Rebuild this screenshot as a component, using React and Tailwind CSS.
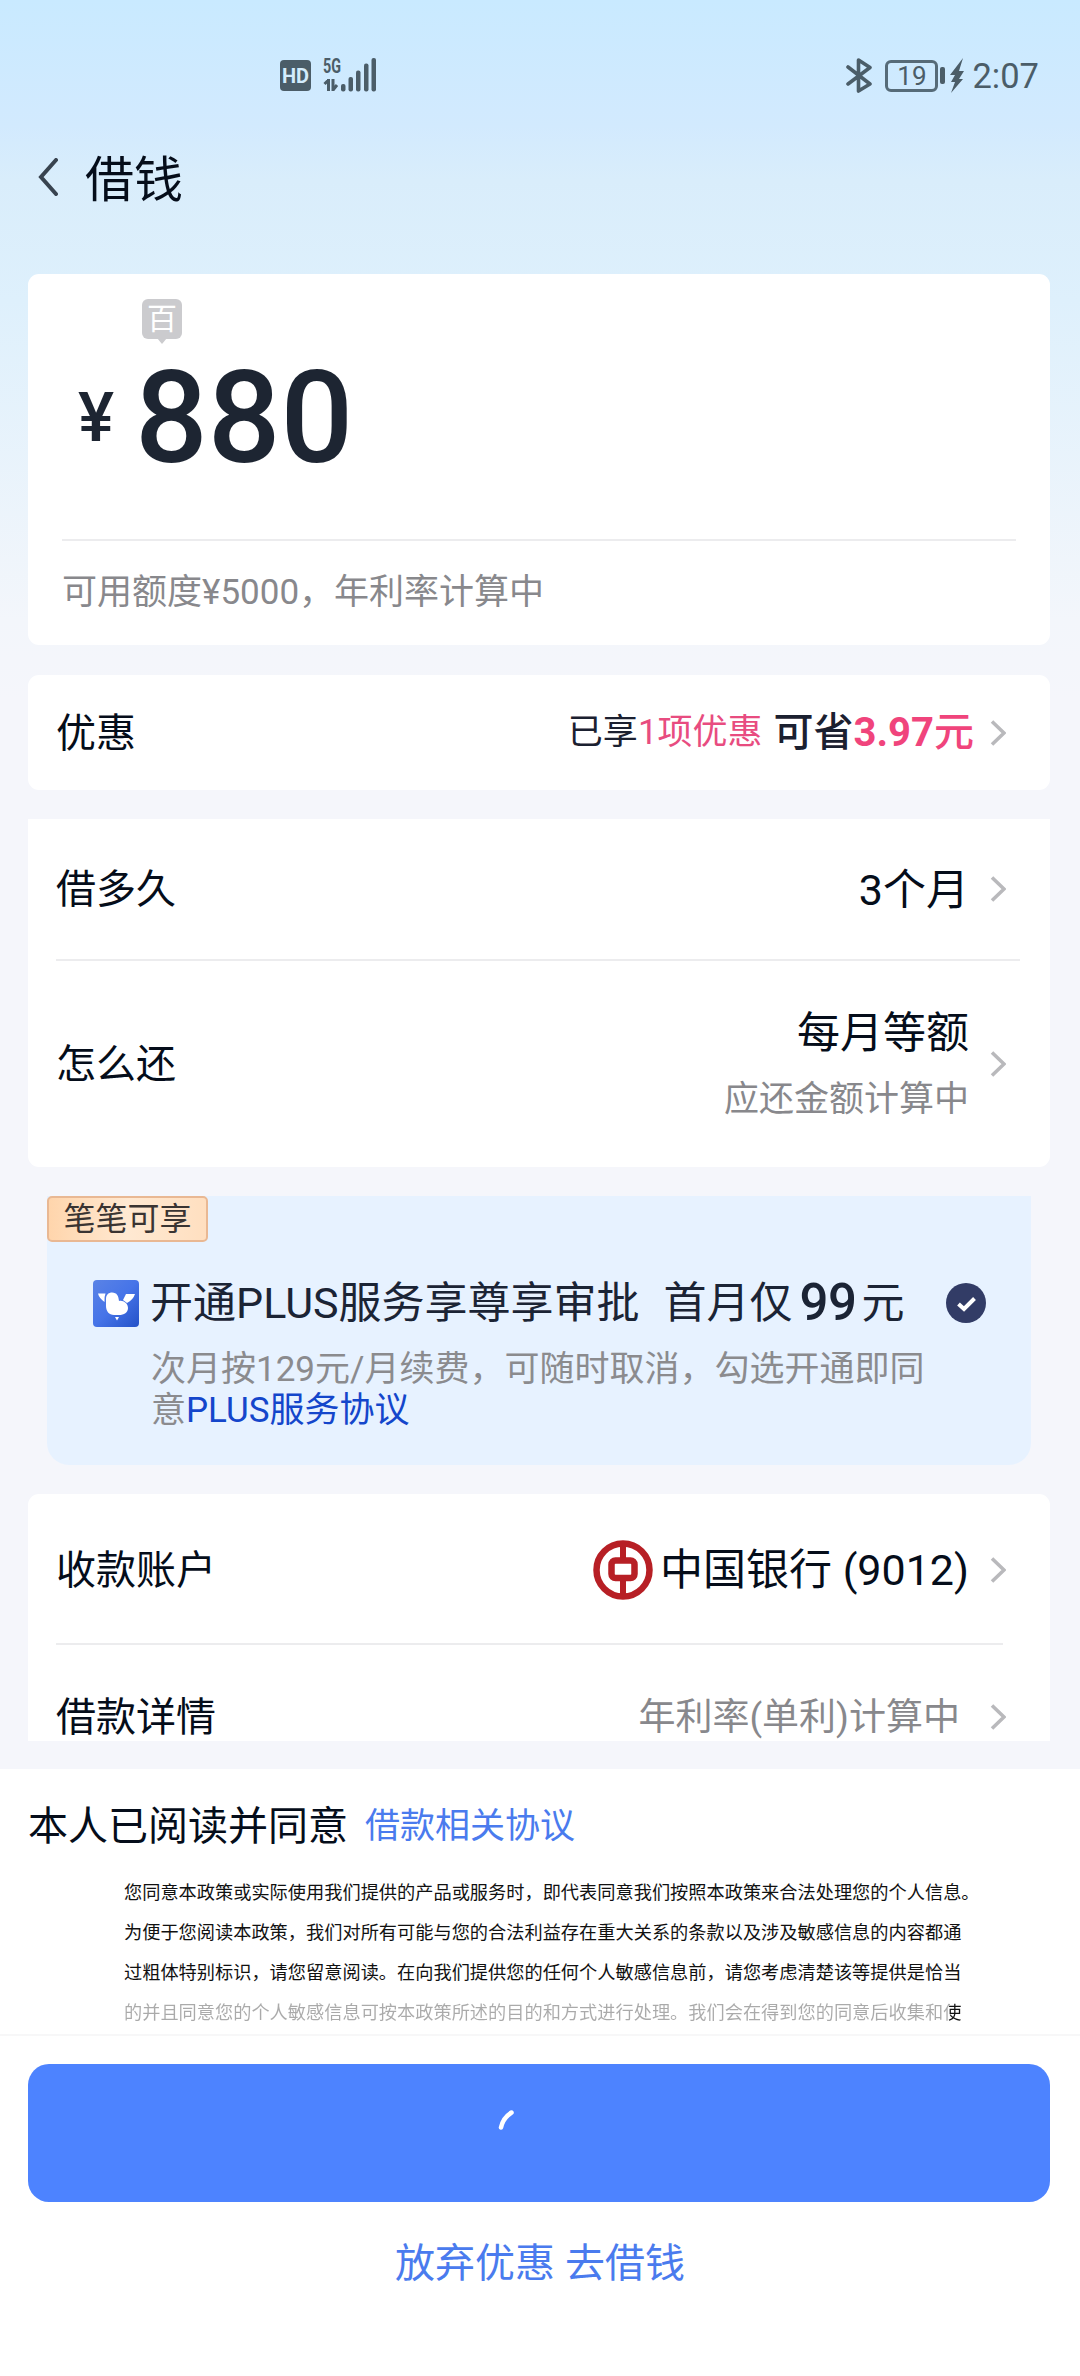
import React from 'react';

const Chevron = () => (
  <svg className="w-4 h-[26px] shrink-0" viewBox="0 0 16 26" fill="none">
    <path d="M2 1.5L14 13L2 24.5" stroke="#b9b9bc" strokeWidth="3.6" />
  </svg>
);

const Row = ({ label, className, children }) => (
  <div className={`flex items-center justify-between pl-7 pr-11 ${className}`}>
    <span className="mt-0.5 text-[40px] text-[#050d1a]">{label}</span>
    <div className="flex items-center">
      {children}
      <Chevron />
    </div>
  </div>
);

const StatusBar = () => (
  <div className="h-[150px] flex items-start justify-between pl-[280px] pr-[41px] pt-[58px] text-[#4b5d68]">
    <div className="flex items-start">
      <div className="w-[31px] h-[31px] mt-0.5 mr-3 rounded-[4px] bg-[#4b5d68] text-[#d3ecfc] flex items-center justify-center text-[20px] font-bold leading-none">
        HD
      </div>
      <svg className="w-[54px] h-[46px] -mt-3" viewBox="0 -12 54 46">
        <text x="0" y="15" fontSize="20" fontWeight="700" textLength="18" lengthAdjust="spacingAndGlyphs" fill="#4b5d68">5G</text>
        <path d="M5.5 21V33M5.5 22L1.5 26M10 21V33M10 32L14 27" stroke="#4b5d68" strokeWidth="3" fill="none" />
        <g fill="#4b5d68">
          <rect x="18" y="26" width="4.5" height="7.5" rx="2" />
          <rect x="25.5" y="19" width="4.5" height="14.5" rx="2" />
          <rect x="33" y="12.5" width="4.5" height="21" rx="2" />
          <rect x="41" y="5.5" width="4.5" height="28" rx="2" />
          <rect x="48.5" y="0" width="4.5" height="33.5" rx="2" />
        </g>
      </svg>
    </div>
    <div className="flex items-start">
      <svg className="w-[27px] h-[35px] mr-3" viewBox="0 0 27 35" fill="none">
        <path d="M2 9L24 26L12.5 33V2L24 9.5L2 26" stroke="#4b5d68" strokeWidth="3.6" strokeLinecap="round" strokeLinejoin="round" />
      </svg>
      <div className="w-[53px] h-[32px] mt-[1.5px] rounded-[6px] border-[3px] border-[#566b78] flex items-center justify-center text-[26px] leading-none">
        19
      </div>
      <div className="w-[5px] h-[17px] mt-[9px] ml-0.5 rounded-[2px] bg-[#4b5d68]" />
      <svg className="w-[14px] h-[35px] ml-[5px] mr-2" viewBox="0 0 14 35">
        <path d="M13 0L0 17H5L1 24H5L1 35L13 21H9L14 13H9Z" fill="#4b5d68" />
      </svg>
      <span className="text-[34.5px] leading-[36px]">2:07</span>
    </div>
  </div>
);

const AmountCard = () => (
  <div className="h-[371px] rounded-[11px] bg-white px-[34px]">
    <div className="h-[267px] border-b-2 border-[#ececee] pt-[25px]">
      <div className="relative w-10 h-10 ml-20 rounded-[6px] bg-[#cbcbce] text-white text-[30px] leading-[40px] text-center">
        百
        <svg className="absolute left-[15px] top-[39px] w-[10px] h-[6px]" viewBox="0 0 10 6">
          <path d="M0 0H10L5 6Z" fill="#cbcbce" />
        </svg>
      </div>
      <div className="flex items-baseline mt-4 pl-4 font-medium text-[#1d2532] leading-[126px]">
        <span className="relative -top-[21px] text-[68px] w-[57px]">¥</span>
        <span className="text-[128px]">880</span>
      </div>
    </div>
    <p className="text-[35px] leading-[103px] text-[#88888c]">可用额度¥5000，年利率计算中</p>
  </div>
);

const BirdLogo = () => (
  <svg className="w-[46px] h-[47px] mr-[11px] shrink-0" viewBox="0 0 46 47">
    <defs>
      <linearGradient id="bird" x1="0" y1="0" x2="1" y2="1">
        <stop offset="0" stopColor="#5a83e6" />
        <stop offset="0.5" stopColor="#4674e8" />
        <stop offset="1" stopColor="#2452c8" />
      </linearGradient>
    </defs>
    <rect width="46" height="47" rx="4" fill="url(#bird)" />
    <g fill="#fff">
      <path d="M5 13.5H12.5Q11 17 11.5 22Q6 18 5 13.5Z" />
      <path d="M13 19C13 14.5 16 12.5 19 12.5C24 12.5 25.5 16 26 21C30 20 35 23 35 28C35 32.5 31 35 26 35H21C16 35 13 31 13 26Z" />
      <path d="M33 14H42Q40 20 34 23L30 20Q31 18 33 14Z" />
      <path d="M22 37H26L24 40.5Z" />
    </g>
  </svg>
);

const PlusCard = () => (
  <div className="h-[269px] mx-[19px] mt-[29px] rounded-b-[22px] bg-[#e7f2ff]">
    <div className="w-[161px] h-[46px] rounded-[5px] border-2 border-[#e9b893] bg-linear-to-r from-[#ffd5ac] via-[#ffe9d2] to-[#ffdfc0] flex items-center justify-center text-[32px] text-[#3a3432]">
      笔笔可享
    </div>
    <div className="flex items-center h-[52px] mt-[35px] pl-[46px] text-[43px] leading-[52px] text-[#1b2435]">
      <BirdLogo />
      <span className="whitespace-nowrap">开通PLUS服务享尊享审批</span>
      <span className="ml-[24px] whitespace-nowrap">首月仅</span>
      <span className="ml-[7px] font-medium text-[51px] tracking-[-0.5px]">99</span>
      <span className="ml-[5px]">元</span>
      <svg className="w-10 h-10 ml-auto mr-[45px] shrink-0" viewBox="0 0 40 40" fill="none">
        <circle cx="20" cy="20" r="20" fill="#323c66" />
        <path d="M12.5 21L18 26L28.5 15.5" stroke="#fff" strokeWidth="4" />
      </svg>
    </div>
    <p className="pl-[104px] mt-5 text-[35px] leading-[41px] text-[#8b8b8e] whitespace-nowrap">
      次月按129元/月续费，可随时取消，勾选开通即同
      <br />
      意<span className="text-[#1446cb]">PLUS服务协议</span>
    </p>
  </div>
);

const BankLogo = () => (
  <svg className="w-[60px] h-[60px] mr-[7px]" viewBox="0 0 60 60" fill="none" stroke="#b71f25">
    <circle cx="30" cy="30" r="26.5" strokeWidth="6.5" />
    <path d="M30 4V20M30 40V56" strokeWidth="6" />
    <rect x="18.5" y="20.5" width="23" height="17.5" rx="4" strokeWidth="6.5" />
  </svg>
);

const policy = [
  '您同意本政策或实际使用我们提供的产品或服务时，即代表同意我们按照本政策来合法处理您的个人信息。',
  '为便于您阅读本政策，我们对所有可能与您的合法利益存在重大关系的条款以及涉及敏感信息的内容都通',
  '过粗体特别标识，请您留意阅读。在向我们提供您的任何个人敏感信息前，请您考虑清楚该等提供是恰当'
];

const App = () => {
  return (
    <div className="w-[1080px] h-[2376px] overflow-hidden flex flex-col bg-[#f5f6fc] font-[Roboto,'Noto_Sans_CJK_SC',sans-serif]">
      <div className="h-[1769px] shrink-0 bg-[linear-gradient(180deg,#c9eaff_0px,#d2eafe_125px,#d9edfb_180px,#def0fc_300px,#f3f6fb_620px,#f5f6fb_700px)]">
        <StatusBar />

        {/* Title */}
        <div className="h-[124px] flex items-start pl-[38px]">
          <svg className="w-5 h-[38px] mt-2" viewBox="0 0 20 38" fill="none">
            <path d="M18 2L3 19L18 36" stroke="#38434f" strokeWidth="4" strokeLinecap="round" />
          </svg>
          <h1 className="ml-[27px] mt-0.5 text-[49px] leading-[58px] text-[#050d1a]">借钱</h1>
        </div>

        <main className="pl-7 pr-[30px]">
          <AmountCard />

          {/* Discount */}
          <div className="mt-[30px] rounded-[11px] bg-white">
            <Row label="优惠" className="h-[115px]">
              <span className="mt-0.5 text-[35px] text-[#1b2030]">
                已享<span className="text-[#e84c80]">1项优惠</span>
              </span>
              <span className="ml-[11px] mr-4 text-[40px] font-medium text-[#1b2030]">
                可省<span className="text-[#f0447c]"><b>3.97</b>元</span>
              </span>
            </Row>
          </div>

          {/* Term and repayment */}
          <div className="mt-[29px] rounded-b-[11px] bg-white">
            <Row label="借多久" className="h-[140px]">
              <span className="mr-[21px] mt-0.5 text-[43px] text-[#050d1a]">3个月</span>
            </Row>
            <div className="h-0.5 ml-7 mr-[30px] bg-[#ececee]" />
            <Row label="怎么还" className="h-[206px]">
              <div className="mr-[21px] pt-[5px] text-right">
                <div className="text-[43px] leading-[66px] text-[#050d1a]">每月等额</div>
                <div className="text-[35px] leading-[68px] text-[#88888c]">应还金额计算中</div>
              </div>
            </Row>
          </div>

          <PlusCard />

          {/* Account */}
          <div className="h-[247px] mt-[29px] overflow-hidden rounded-t-[11px] bg-white">
            <Row label="收款账户" className="h-[149px] pt-0.5">
              <BankLogo />
              <span className="mr-[21px] mt-0.5 text-[43px] text-[#050d1a]">中国银行 (9012)</span>
            </Row>
            <div className="h-0.5 ml-7 mr-[47px] bg-[#ececee]" />
            <Row label="借款详情" className="h-[143px]">
              <span className="mr-[30px] mt-0.5 text-[37px] text-[#88888c]">年利率(单利)计算中</span>
            </Row>
          </div>
        </main>
      </div>

      {/* Agreement */}
      <div className="h-[267px] shrink-0 bg-white border-b-2 border-[#f7f7f8] pt-[28px]">
        <div className="flex items-center h-[60px] pl-7">
          <span className="text-[40px] text-[#050d1a]">本人已阅读并同意</span>
          <span className="ml-[17px] text-[35px] text-[#4a7bee]">借款相关协议</span>
        </div>
        <div className="mt-4 pl-[124px] text-[18.22px] leading-10 text-[#111] whitespace-nowrap">
          {policy.map((line, index) => (
            <p key={index}>{line}</p>
          ))}
          <p className="w-fit text-transparent bg-clip-text bg-[linear-gradient(90deg,#aaa_825px,#111_825px)]">
            的并且同意您的个人敏感信息可按本政策所述的目的和方式进行处理。我们会在得到您的同意后收集和使
          </p>
        </div>
      </div>

      {/* Actions */}
      <div className="grow bg-white pl-7 pr-[30px] pt-7">
        <button className="block w-full h-[138px] rounded-[21px] bg-[#4d83ff] pl-[470px]">
          <svg className="w-[16px] h-[20px] -mt-[23px]" viewBox="0 0 16 20" fill="none">
            <path d="M3 17.5Q5 8 13.5 2.5" stroke="#fff" strokeWidth="4.5" strokeLinecap="round" />
          </svg>
        </button>
        <button className="block mx-auto mt-8 pl-0.5 text-[40px] leading-[60px] text-[#4a7bee]">放弃优惠 去借钱</button>
      </div>
    </div>
  );
};

export default App;
